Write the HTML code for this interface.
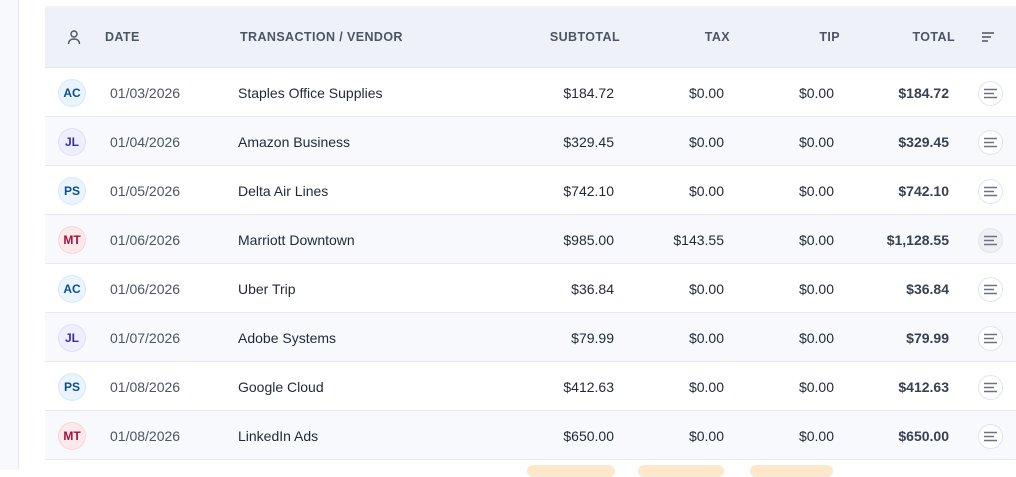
<!DOCTYPE html>
<html><head><style>
body{margin:0;width:1016px;height:470px;overflow:hidden;background:#fff;font-family:"Liberation Sans",sans-serif;position:relative}
.side{position:absolute;left:0;top:0;width:18px;height:470px;background:#f8f9fd;border-right:1px solid #e6e9f0}
.tbl{position:absolute;left:45px;top:6px;width:971px}
.hd{height:61px;background:#eef1f8;border-bottom:1px solid #e3e7ee;position:relative;font-size:12.5px;font-weight:bold;color:#4a5566;letter-spacing:.4px}
.row{height:48px;border-bottom:1px solid #e6e9ef;position:relative;font-size:14px;color:#1f2937}
.row.alt{background:#f8f9fc}
.c{position:absolute;top:1px;line-height:48px}
.hd .c{line-height:61px;top:1px}
.r{text-align:right}
.av{position:absolute;left:14px;top:12px;width:26px;height:26px;border-radius:50%;font-size:12px;font-weight:bold;text-align:center;line-height:26px}
.ac{background:#eaf4fd;color:#0b4f8a;box-shadow:0 0 0 1px #d6e8fa}
.jl{background:#eeeefc;color:#3730a3;box-shadow:0 0 0 1px #dedff7}
.ps{background:#eaf4fd;color:#0b4f8a;box-shadow:0 0 0 1px #d6e8fa}
.mt{background:#fde9ec;color:#9f1239;box-shadow:0 0 0 1px #f9d5da}
.date{left:65px;color:#4b5563}
.tot{font-weight:bold;color:#374151}
.btn{position:absolute;left:933px;top:13px;width:23px;height:23px;border-radius:50%;border:1px solid #e1e5eb;background:#fff}
.btn svg,.hd svg{position:absolute}
.pill{position:absolute;top:465px;height:12px;border-radius:6px;background:#fde8cc}
</style></head><body>
<div class="side"></div>
<div class="tbl">
<div class="hd">
<svg style="left:22px;top:23px" width="14" height="16" viewBox="0 0 14 16" fill="none" stroke="#4a5566" stroke-width="1.4"><circle cx="7" cy="5" r="3"/><path d="M1.5 15c0-3.5 2.5-5 5.5-5s5.5 1.5 5.5 5"/></svg>
<div class="c" style="left:60px">DATE</div>
<div class="c" style="left:195px">TRANSACTION / VENDOR</div>
<div class="c r" style="right:396px">SUBTOTAL</div>
<div class="c r" style="right:286px">TAX</div>
<div class="c r" style="right:176px">TIP</div>
<div class="c r" style="right:61px">TOTAL</div>
<svg style="left:937px;top:26px" width="12" height="10" viewBox="0 0 12 10" stroke="#4a5566" stroke-width="1.5"><path d="M0 1h12M0 5h9M0 9h6"/></svg>
</div>
<div id="rows"></div>
</div>
<div class="pill" style="left:527px;width:88px"></div>
<div class="pill" style="left:638px;width:86px"></div>
<div class="pill" style="left:750px;width:83px"></div>
<script>
var d=[["ac","AC","01/03/2026","Staples Office Supplies","$184.72","$0.00","$184.72"],
["jl","JL","01/04/2026","Amazon Business","$329.45","$0.00","$329.45"],
["ps","PS","01/05/2026","Delta Air Lines","$742.10","$0.00","$742.10"],
["mt","MT","01/06/2026","Marriott Downtown","$985.00","$143.55","$1,128.55"],
["ac","AC","01/06/2026","Uber Trip","$36.84","$0.00","$36.84"],
["jl","JL","01/07/2026","Adobe Systems","$79.99","$0.00","$79.99"],
["ps","PS","01/08/2026","Google Cloud","$412.63","$0.00","$412.63"],
["mt","MT","01/08/2026","LinkedIn Ads","$650.00","$0.00","$650.00"]];
var h="";d.forEach(function(r,i){h+='<div class="row'+(i%2?' alt':'')+'"><div class="av '+r[0]+'">'+r[1]+'</div><div class="c date">'+r[2]+'</div><div class="c" style="left:193px">'+r[3]+'</div><div class="c r" style="right:402px">'+r[4]+'</div><div class="c r" style="right:292px">'+r[5]+'</div><div class="c r" style="right:182px">$0.00</div><div class="c r tot" style="right:67px">'+r[6]+'</div><div class="btn" style="'+(i==3?'background:#eef0f4':'')+'"><svg style="left:5px;top:6px" width="13" height="11" viewBox="0 0 13 11" stroke="#6b7280" stroke-width="1.4"><path d="M0 1.5h13M0 5.5h10M0 9.5h13"/></svg></div></div>'});
document.getElementById("rows").innerHTML=h;
</script>
</body></html>
